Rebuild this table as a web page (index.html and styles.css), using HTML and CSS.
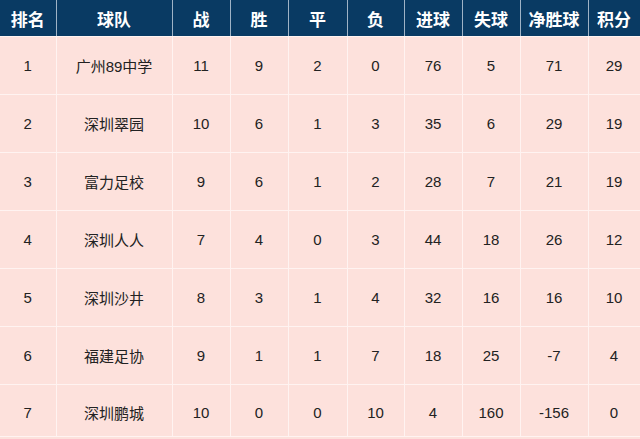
FILE: index.html
```html
<!DOCTYPE html>
<html lang="zh-CN">
<head>
<meta charset="utf-8">
<title>积分榜</title>
<link rel="stylesheet" href="styles.css">
</head>
<body>
<table class="standings">
  <colgroup>
    <col class="c-rank"><col class="c-team"><col class="c-n"><col class="c-n"><col class="c-n3"><col class="c-n4"><col class="c-n"><col class="c-n"><col class="c-gd"><col class="c-pts">
  </colgroup>
  <thead>
    <tr><th>排名</th><th>球队</th><th>战</th><th>胜</th><th>平</th><th>负</th><th>进球</th><th>失球</th><th>净胜球</th><th>积分</th></tr>
  </thead>
  <tbody>
    <tr><td>1</td><td>广州89中学</td><td>11</td><td>9</td><td>2</td><td>0</td><td>76</td><td>5</td><td>71</td><td>29</td></tr>
    <tr><td>2</td><td>深圳翠园</td><td>10</td><td>6</td><td>1</td><td>3</td><td>35</td><td>6</td><td>29</td><td>19</td></tr>
    <tr><td>3</td><td>富力足校</td><td>9</td><td>6</td><td>1</td><td>2</td><td>28</td><td>7</td><td>21</td><td>19</td></tr>
    <tr><td>4</td><td>深圳人人</td><td>7</td><td>4</td><td>0</td><td>3</td><td>44</td><td>18</td><td>26</td><td>12</td></tr>
    <tr><td>5</td><td>深圳沙井</td><td>8</td><td>3</td><td>1</td><td>4</td><td>32</td><td>16</td><td>16</td><td>10</td></tr>
    <tr><td>6</td><td>福建足协</td><td>9</td><td>1</td><td>1</td><td>7</td><td>18</td><td>25</td><td>-7</td><td>4</td></tr>
    <tr class="last"><td>7</td><td>深圳鹏城</td><td>10</td><td>0</td><td>0</td><td>10</td><td>4</td><td>160</td><td>-156</td><td>0</td></tr>
  </tbody>
</table>
</body>
</html>
```
FILE: styles.css
```css
html, body {
  margin: 0;
  padding: 0;
  background: #fde1dc;
}
.standings {
  width: 640px;
  table-layout: fixed;
  border-collapse: collapse;
  font-family: "Liberation Sans", "Noto Sans CJK SC", sans-serif;
  color: #222;
}
.c-rank { width: 56px; }
.c-team { width: 116px; }
.c-n { width: 58px; }
.c-n3 { width: 59px; }
.c-n4 { width: 57px; }
.c-gd { width: 68px; }
.c-pts { width: 52px; }
.standings th,
.standings td {
  padding: 0;
  text-align: center;
  vertical-align: middle;
  border: 1px solid #fff3f1;
}
.standings th {
  height: 36px;
  background: #093a63;
  color: #fff;
  font-size: 17px;
  font-weight: bold;
  border-color: #9fb3c6;
  border-bottom-color: #fff3f1;
  border-top: none;
}
.standings td {
  height: 57px;
  background: #fde1dc;
  font-size: 15px;
}
.standings th:first-child,
.standings td:first-child { border-left: none; }
.standings th:last-child,
.standings td:last-child { border-right-color: #fff3f1; }
.standings tr.last td {
  height: 52px;
  padding-top: 4px;
  box-sizing: border-box;
}
```
